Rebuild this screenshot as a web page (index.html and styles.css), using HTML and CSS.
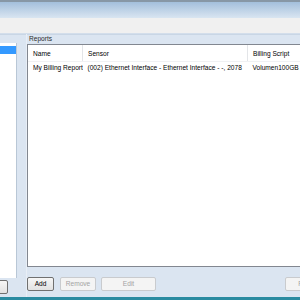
FILE: index.html
```html
<!DOCTYPE html>
<html lang="en">

<head>
    <meta charset="UTF-8">
    <meta name="viewport" content="width=device-width, initial-scale=1.0">
    <link rel="stylesheet" href="styles.css">
</head>

<body>
    <div class="window">
        <div class="topline"></div>
        <div class="toolbar"></div>
        <div class="menuband"></div>
        <div class="main">
            <div class="left">
                <div class="listbox">
                    <div class="sel"></div>
                </div>
                <div class="btnrow end">
                    <button class="btn wide"></button>
                </div>
            </div>
            <div class="splitter"></div>
            <div class="right">
                <div class="grouplabel">Reports</div>
                <div class="listview">
                    <table>
                        <thead>
                            <tr>
                                <th class="c1">Name</th>
                                <th class="c2">Sensor</th>
                                <th class="c3">Billing Script</th>
                            </tr>
                        </thead>
                        <tbody>
                            <tr>
                                <td>My Billing Report</td>
                                <td>(002) Ethernet Interface - Ethernet Interface - -, 2078</td>
                                <td>Volumen100GB</td>
                            </tr>
                        </tbody>
                    </table>
                </div>
                <div class="btnrow">
                    <button class="btn add">Add</button>
                    <button class="btn remove" disabled>Remove</button>
                    <button class="btn edit" disabled>Edit</button>
                    <span class="fill"></span>
                    <button class="btn print" disabled>Print</button>
                </div>
            </div>
        </div>
        <div class="bottomline"></div>
    </div>
</body>

</html>
```

FILE: styles.css
```css
html,
body {
    margin: 0;
    padding: 0;
}

body {
    width: 300px;
    height: 300px;
    overflow: hidden;
    font-family: "Liberation Sans", Arial, sans-serif;
    font-size: 6.6px;
    color: #000;
}

.window {
    display: flex;
    flex-direction: column;
    height: 300px;
}

.topline {
    height: 2px;
    background: #8797a6;
}

.toolbar {
    height: 16px;
    background: linear-gradient(#a3bfdc, #d9e5f1);
}

.menuband {
    height: 15px;
    background: #f0f0f0;
}

.main {
    flex: 1;
    display: flex;
    background: #dbe5f1;
    border-top: 1px solid #d3deeb;
    box-shadow: inset 0 3px 0 -2px #c9d6e5;
}

.left {
    width: 17px;
    display: flex;
    flex-direction: column;
    padding-top: 9px;
    overflow: hidden;
}

.listbox {
    height: 232px;
    background: #fff;
    border-right: 1px solid #b9c7d6;
    padding-top: 3px;
}

.sel {
    height: 8px;
    background: #3399ff;
}

.splitter {
    width: 10px;
    box-shadow: inset -5px 0 0 -4px #e8eef6;
}

.right {
    flex: 1;
    display: flex;
    flex-direction: column;
    overflow: hidden;
    min-width: 0;
}

.grouplabel {
    height: 10px;
    line-height: 9px;
    padding-left: 2px;
    color: #2b2b2b;
}

.listview {
    height: 221px;
    background: #fff;
    border: 1px solid #828790;
    border-right: none;
    overflow: hidden;
}

table {
    border-collapse: collapse;
    table-layout: fixed;
    width: 420px;
    white-space: nowrap;
}

th {
    height: 15px;
    line-height: 15px;
    padding: 1px 0 0 5px;
    font-weight: normal;
    text-align: left;
    border-right: 1px solid #e3e5e8;
    border-bottom: 1px solid #f0f1f3;
}

td {
    height: 12px;
    line-height: 12px;
    padding: 0 0 0 5px;
    overflow: hidden;
}

.c1 {
    width: 49px;
}

.c2 {
    width: 159px;
}

.btnrow {
    display: flex;
    gap: 6px;
    margin-top: 10px;
    height: 14px;
}

.end {
    justify-content: flex-end;
    padding-right: 9px;
    margin-top: 2px;
}

.btn {
    flex: none;
    height: 14px;
    padding: 0;
    font-family: inherit;
    font-size: 6.6px;
    line-height: 10px;
    background: linear-gradient(#f6f6f6, #e2e2e2);
    border: 1px solid #707070;
    border-radius: 2px;
    color: #000;
}

.btn:disabled {
    background: #f4f4f4;
    border-color: #c9cbce;
    color: #a3a3a3;
}

.add {
    width: 27px;
}

.remove {
    width: 36px;
}

.edit {
    width: 55px;
    margin-left: -1px;
}

.fill {
    flex: 1;
}

.wide {
    width: 60px;
}

.print {
    width: 40px;
    margin-right: -25px;
}

.bottomline {
    height: 3px;
    background: #2a8ba1;
}
```
